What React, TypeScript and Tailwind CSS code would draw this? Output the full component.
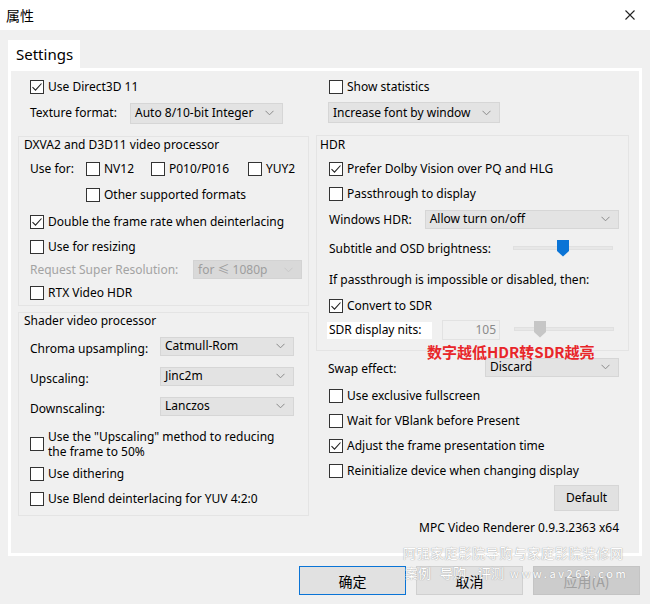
import React from 'react';

const Check = ({ checked }: { checked?: boolean }) => (
  <span className="w-[14px] h-[14px] shrink-0 border border-[#333] bg-white flex items-center justify-center">
    {checked && (
      <svg width="12" height="12" viewBox="0 0 12 12">
        <path d="M1.5 6.2 L4.5 9.2 L10.5 2.5" fill="none" stroke="#222" strokeWidth="1.1" />
      </svg>
    )}
  </span>
);

const CheckRow = ({ label, checked, h = 'h-[25px]', w = '' }: { label: string; checked?: boolean; h?: string; w?: string }) => (
  <div className={`flex items-center ${h} ${w}`}>
    <Check checked={checked} />
    <span className="ml-[4px] whitespace-nowrap">{label}</span>
  </div>
);

const Chevron = ({ light }: { light?: boolean }) => (
  <svg width="9" height="6" viewBox="0 0 9 6" className="shrink-0">
    <path d="M0.5 0.8 L4.5 4.8 L8.5 0.8" fill="none" stroke={light ? '#c8c8c8' : '#8a8a8a'} strokeWidth="1" />
  </svg>
);

const Select = ({ value, w, h = 'h-[20px]', disabled }: { value: string; w: string; h?: string; disabled?: boolean }) => (
  <div className={`${w} ${h} flex items-center justify-between pl-[4px] pr-[8px] border ${disabled ? 'bg-[#d9d9d9] border-[#d3d3d3] text-[#9e9e9e]' : 'bg-[#e3e3e3] border-[#d6d6d6]'}`}>
    <span className="whitespace-nowrap">{value}</span>
    <Chevron light={disabled} />
  </div>
);

const Slider = ({ pos, blue }: { pos: number; blue?: boolean }) => (
  <div className="w-[100px] h-[18px] relative">
    <div className="absolute left-0 right-0 top-[6px] h-[4px] bg-[#e7e7e7] border border-[#e0e0e0]" />
    <svg width="12" height="17" viewBox="0 0 12 17" className="absolute top-0" style={{ left: pos }}>
      <path d="M0 0 H12 V11 L6 16.5 L0 11 Z" fill={blue ? '#0a74d6' : '#c6c6c6'} />
    </svg>
  </div>
);

export default function App() {
  return (
    <div className="w-[650px] h-[604px] bg-[#f0f0f0] relative overflow-hidden text-[12px] text-black font-['Segoe_UI','Noto_Sans','Noto_Sans_CJK_SC',sans-serif] leading-none">
      {/* Title bar */}
      <div className="h-[30px] bg-white flex items-center justify-between pl-[6px] pr-[15px]">
        <span className="text-[14px] font-['Noto_Sans_CJK_SC',sans-serif]">属性</span>
        <svg width="10" height="10" viewBox="0 0 10 10">
          <path d="M0.5 0.5 L9.5 9.5 M9.5 0.5 L0.5 9.5" stroke="#222" strokeWidth="1.1" />
        </svg>
      </div>

      {/* Tab */}
      <div className="pt-[10px] pl-[8px]">
        <div className="w-[72px] h-[28px] bg-white flex items-center pl-[8px] text-[15px]">Settings</div>
      </div>

      {/* Panel */}
      <div className="ml-[8px] w-[634px] h-[488px] border-[3px] border-white bg-[#f0f0f0] flex pt-[3px]">
        {/* Left column */}
        <div className="w-[298px] pl-[7px] flex flex-col">
          <div className="pl-[12px]">
            <CheckRow label="Use Direct3D 11" checked />
            <div className="flex items-center h-[26px] mt-[1px]">
              <span className="w-[100px]">Texture format:</span>
              <Select value="Auto 8/10-bit Integer" w="w-[153px]" h="h-[21px]" />
            </div>
          </div>

          <div className="mt-[10px] h-[170px] border border-[#e4e4e4] flex flex-col">
            <div className="h-[15px] flex items-center pl-[5px]">DXVA2 and D3D11 video processor</div>
            <div className="pl-[11px] flex flex-col">
              <div className="flex items-center h-[24px] mt-[5px]">
                <span className="w-[56px]">Use for:</span>
                <CheckRow label="NV12" w="w-[65px]" />
                <CheckRow label="P010/P016" w="w-[97px]" />
                <CheckRow label="YUY2" />
              </div>
              <div className="pl-[56px]">
                <CheckRow label="Other supported formats" h="h-[28px]" />
              </div>
              <CheckRow label="Double the frame rate when deinterlacing" checked h="h-[26px]" />
              <CheckRow label="Use for resizing" h="h-[23px]" />
              <div className="flex items-center h-[23px]">
                <span className="w-[163px] text-[#a3a3a3]">Request Super Resolution:</span>
                <Select value="for ≤ 1080p" w="w-[109px]" h="h-[19px]" disabled />
              </div>
              <CheckRow label="RTX Video HDR" h="h-[23px]" />
            </div>
          </div>

          <div className="mt-[6px] h-[204px] border border-[#e4e4e4] flex flex-col">
            <div className="h-[15px] flex items-center pl-[5px]">Shader video processor</div>
            <div className="pl-[11px] pr-[14px] flex flex-col">
              <div className="flex items-center justify-between h-[30px] mt-[3px]">
                <span className="pt-[6px]">Chroma upsampling:</span>
                <Select value="Catmull-Rom" w="w-[134px]" h="h-[19px]" />
              </div>
              <div className="flex items-center justify-between h-[30px]">
                <span className="pt-[6px]">Upscaling:</span>
                <Select value="Jinc2m" w="w-[134px]" h="h-[19px]" />
              </div>
              <div className="flex items-center justify-between h-[30px]">
                <span className="pt-[6px]">Downscaling:</span>
                <Select value="Lanczos" w="w-[134px]" h="h-[19px]" />
              </div>
              <div className="flex items-center h-[34px] mt-[6px]">
                <Check />
                <span className="ml-[4px] leading-[15px]">
                  Use the "Upscaling" method to reducing
                  <br />
                  the frame to 50%
                </span>
              </div>
              <CheckRow label="Use dithering" h="h-[25px]" />
              <CheckRow label="Use Blend deinterlacing for YUV 4:2:0" />
            </div>
          </div>
        </div>

        {/* Right column */}
        <div className="w-[313px] ml-[7px] flex flex-col">
          <div className="pl-[13px]">
            <CheckRow label="Show statistics" />
          </div>
          <div className="pl-[12px] mt-[1px] h-[25px] flex items-center">
            <Select value="Increase font by window" w="w-[172px]" h="h-[21px]" />
          </div>

          <div className="mt-[10px] h-[216px] border border-[#e4e4e4] flex flex-col">
            <div className="h-[15px] flex items-center pl-[3px] pt-[2px]">HDR</div>
            <div className="pl-[12px] pr-[9px] mt-[6px] flex flex-col">
              <CheckRow label="Prefer Dolby Vision over PQ and HLG" checked h="h-[24px]" />
              <CheckRow label="Passthrough to display" h="h-[25px]" />
              <div className="flex items-center h-[26px]">
                <span className="w-[96px] pt-[2px]">Windows HDR:</span>
                <Select value="Allow turn on/off" w="w-[195px]" h="h-[19px]" />
              </div>
              <div className="flex items-center justify-between h-[34px] pr-[6px]">
                <span>Subtitle and OSD brightness:</span>
                <Slider pos={44} blue />
              </div>
              <div className="flex items-center h-[28px]">If passthrough is impossible or disabled, then:</div>
              <CheckRow label="Convert to SDR" checked h="h-[23px]" />
              <div className="flex items-center h-[26px]">
                <span className="h-[17px] w-[105px] -ml-[2px] pl-[2px] bg-white flex items-center">SDR display nits:</span>
                <div className="ml-[10px] w-[58px] h-[20px] border border-[#e2e2e2] flex items-center justify-end pr-[3px] text-[#8a8a8a]">105</div>
                <div className="ml-[14px]">
                  <Slider pos={20} />
                </div>
              </div>
            </div>
          </div>

          <div className="pl-[12px] pr-[10px] flex flex-col">
            <div className="flex items-center justify-between h-[20px] mt-[6px]">
              <span className="pt-[4px]">Swap effect:</span>
              <Select value="Discard" w="w-[134px]" h="h-[19px]" />
            </div>
            <div className="pl-px mt-[6px]">
              <CheckRow label="Use exclusive fullscreen" />
              <CheckRow label="Wait for VBlank before Present" />
              <CheckRow label="Adjust the frame presentation time" checked />
              <CheckRow label="Reinitialize device when changing display" />
            </div>
            <div className="flex justify-end mt-[2px]">
              <div className="w-[65px] h-[26px] bg-[#e1e1e1] border border-[#d6d6d6] flex items-center justify-center">Default</div>
            </div>
            <div className="flex justify-end h-[34px] items-center">MPC Video Renderer 0.9.3.2363 x64</div>
          </div>
        </div>
      </div>

      {/* Bottom buttons */}
      <div className="flex justify-end gap-[10px] pr-[10px] mt-[10px]">
        <div className="w-[107px] h-[29px] bg-[#e1e1e1] border-[1.5px] border-[#0a74d6] flex items-center justify-center font-['Noto_Sans_CJK_SC',sans-serif] text-[14px]">确定</div>
        <div className="w-[107px] h-[29px] bg-[#e1e1e1] border border-[#d0d0d0] flex items-center justify-center font-['Noto_Sans_CJK_SC',sans-serif] text-[14px]">取消</div>
        <div className="w-[107px] h-[29px] bg-[#cccccc] border border-[#c4c4c4] flex items-center justify-center font-['Noto_Sans_CJK_SC',sans-serif] text-[14px] text-[#a0a0a0]">应用(A)</div>
      </div>

      {/* Annotation */}
      <div className="absolute left-[427px] top-[342px] text-[15px] font-bold text-[#e8262a] font-['Noto_Sans_CJK_SC',sans-serif] leading-[20px] whitespace-nowrap">
        数字越低HDR转SDR越亮
      </div>

      {/* Watermark */}
      <div className="absolute left-[403px] top-[545px] text-[13px] text-white font-['Noto_Sans_CJK_SC',sans-serif] leading-[16px] tracking-[0.8px] whitespace-nowrap [text-shadow:0_0_1px_#a8a8a8,0_0_1px_#a8a8a8]">
        阿强家庭影院导购与家庭影院装修网
      </div>
      <div className="absolute left-[405px] top-[565px] flex items-center text-[13px] text-white font-['Noto_Sans_CJK_SC',sans-serif] leading-[16px] whitespace-nowrap [text-shadow:0_0_1px_#a8a8a8,0_0_1px_#a8a8a8]">
        <span className="w-[35px]">案例</span>
        <span className="w-[38px]">导购</span>
        <span className="w-[32px]">评测</span>
        <span className="text-[11px] tracking-[2.6px]">www.av269.com</span>
      </div>
    </div>
  );
}
